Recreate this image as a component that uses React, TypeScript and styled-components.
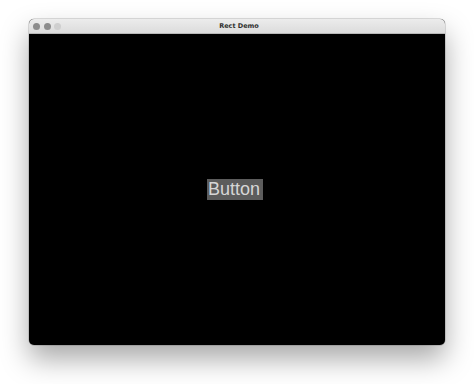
import React from "react";
import styled, { createGlobalStyle } from "styled-components";

const GlobalStyle = createGlobalStyle`
  html, body {
    margin: 0;
    padding: 0;
    background: #ffffff;
  }
  body {
    font-family: "Liberation Sans", Arial, sans-serif;
    -webkit-font-smoothing: antialiased;
  }
`;

const Page = styled.div`
  width: 474px;
  height: 384px;
  display: flex;
  justify-content: center;
  padding-top: 19px;
  box-sizing: border-box;
`;

const Window = styled.div`
  width: 416px;
  height: 326px;
  display: flex;
  flex-direction: column;
  border-radius: 5px;
  overflow: hidden;
  background: #000;
  box-shadow: 0 14px 28px rgba(0, 0, 0, 0.34), 0 0 0 0.5px rgba(0, 0, 0, 0.25);
`;

const TitleBar = styled.div`
  position: relative;
  height: 15px;
  flex: none;
  display: flex;
  align-items: center;
  justify-content: center;
  background: linear-gradient(#ececec, #dcdcdc);
  border-bottom: 1px solid #b8b8b8;
  box-sizing: border-box;
`;

const Lights = styled.div`
  position: absolute;
  left: 4px;
  top: 4px;
  display: flex;
  gap: 3.5px;
`;

const Light = styled.span<{ $dim?: boolean }>`
  width: 7px;
  height: 7px;
  border-radius: 50%;
  background: ${(p) => (p.$dim ? "#cfcfcf" : "#8c8c8c")};
`;

const Title = styled.span`
  font-family: "DejaVu Sans", "Liberation Sans", sans-serif;
  font-size: 6.5px;
  font-weight: bold;
  color: #2e2e2e;
  margin-left: 4px;
`;

const Content = styled.div`
  flex: 1;
  display: flex;
  align-items: center;
  justify-content: center;
  padding-right: 4px;
`;

const Button = styled.button`
  width: 56px;
  height: 21px;
  padding: 0 0 0 1px;
  border: none;
  background: #5c5c5c;
  color: #d6d6d6;
  font-family: "Liberation Sans", Arial, sans-serif;
  font-size: 18px;
  line-height: 21px;
  text-align: left;
  white-space: nowrap;
  overflow: hidden;
`;

export default function App() {
  return (
    <>
      <GlobalStyle />
      <Page>
        <Window>
          <TitleBar>
            <Lights>
              <Light />
              <Light />
              <Light $dim />
            </Lights>
            <Title>Rect Demo</Title>
          </TitleBar>
          <Content>
            <Button>Button</Button>
          </Content>
        </Window>
      </Page>
    </>
  );
}
